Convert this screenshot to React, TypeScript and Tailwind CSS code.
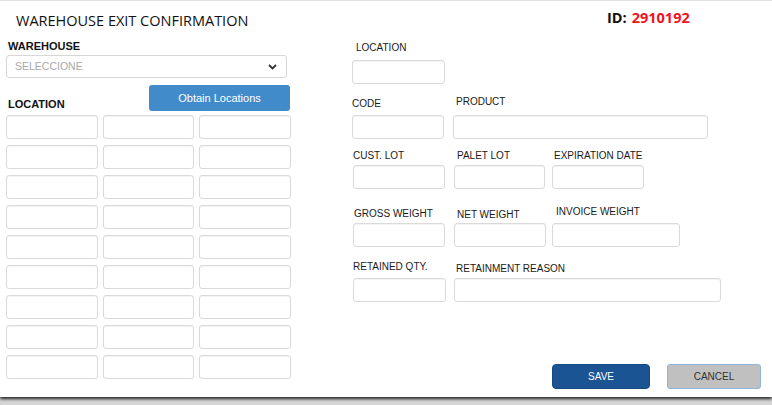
const label = "text-[10px] leading-[12px] text-[#1a1a1a] whitespace-nowrap";
const input =
  "h-[24px] rounded-[3px] border border-[#dadada] bg-white shadow-[inset_0_1px_1px_rgba(0,0,0,0.05)]";

function LocationGrid() {
  const cells = Array.from({ length: 27 }, (_, i) => i);
  return (
    <div className="mt-[4px] grid grid-cols-3 gap-x-[5px] gap-y-[6px]">
      {cells.map((i) => (
        <div key={i} className={input} />
      ))}
    </div>
  );
}

export default function App() {
  return (
    <div className="h-[405px] w-full overflow-hidden bg-[#d6d6d6] font-['Liberation_Sans',Arial,sans-serif]">
      <div className="flex h-[397px] w-full border-t border-[#e2e2e2] bg-white shadow-[0_2px_3px_rgba(0,0,0,0.85)]">
        {/* left column */}
        <div className="ml-[6px] flex w-[285px] flex-col">
          <h1 className="pl-[10px] pt-[10px] font-['Open_Sans',sans-serif] text-[14.5px] leading-[20px] text-[#111]">
            WAREHOUSE EXIT CONFIRMATION
          </h1>
          <div className="mt-[9px] pl-[2px] text-[11px] font-bold leading-[13px] text-[#111]">
            WAREHOUSE
          </div>
          <div className="mt-[2px] flex h-[23px] w-[281px] items-center justify-between rounded-[3px] border border-[#d6d6d6] bg-white pl-[8px] pr-[9px]">
            <span className="text-[10.5px] text-[#a9a9a9]">SELECCIONE</span>
            <svg width="9" height="6" viewBox="0 0 9 6" fill="none">
              <path d="M1 1l3.5 3.5L8 1" stroke="#333" strokeWidth="1.8" />
            </svg>
          </div>
          <div className="mt-[7px] flex items-end justify-between">
            <div className="pl-[2px] text-[11px] font-bold leading-[13px] text-[#111]">LOCATION</div>
            <button className="mr-[1px] flex h-[26px] w-[141px] items-center justify-center rounded-[3px] bg-[#428bca] text-[11px] text-white">
              Obtain Locations
            </button>
          </div>
          <LocationGrid />
        </div>

        {/* right column */}
        <div className="ml-[61px] flex flex-1 flex-col">
          <div className="flex h-[20px] pl-[255px] pt-[7px] box-content font-['Open_Sans',sans-serif] text-[14.5px] font-bold leading-[20px]">
            <span className="text-[#111]">ID:</span>
            <span className="ml-[5px] text-[#f0141e]">2910192</span>
          </div>

          <div className="flex h-[32px]">
            <div className={`${label} pl-[4px] pt-[14px]`}>LOCATION</div>
          </div>
          <div className="flex">
            <div className={`${input} w-[93px]`} />
          </div>

          <div className="flex h-[31px]">
            <div className={`${label} w-[92px] pt-[14px]`}>CODE</div>
            <div className={`${label} ml-[9px] pl-[3px] pt-[12px]`}>PRODUCT</div>
          </div>
          <div className="flex">
            <div className={`${input} w-[92px]`} />
            <div className={`${input} ml-[9px] w-[255px]`} />
          </div>

          <div className="flex h-[26px]">
            <div className={`${label} ml-[1px] w-[92px] pt-[11px]`}>CUST. LOT</div>
            <div className={`${label} ml-[9px] w-[91px] pl-[3px] pt-[11px]`}>PALET LOT</div>
            <div className={`${label} ml-[7px] pl-[2px] pt-[11px]`}>EXPIRATION DATE</div>
          </div>
          <div className="flex">
            <div className={`${input} ml-[1px] w-[92px]`} />
            <div className={`${input} ml-[9px] w-[91px]`} />
            <div className={`${input} ml-[7px] w-[92px]`} />
          </div>

          <div className="flex h-[34px]">
            <div className={`${label} ml-[1px] w-[92px] pl-[1px] pt-[19px]`}>GROSS WEIGHT</div>
            <div className={`${label} ml-[9px] w-[92px] pl-[3px] pt-[20px]`}>NET WEIGHT</div>
            <div className={`${label} ml-[6px] pl-[4px] pt-[17px]`}>INVOICE WEIGHT</div>
          </div>
          <div className="flex">
            <div className={`${input} ml-[1px] w-[92px]`} />
            <div className={`${input} ml-[9px] w-[92px]`} />
            <div className={`${input} ml-[6px] w-[128px]`} />
          </div>

          <div className="flex h-[31px]">
            <div className={`${label} ml-[1px] w-[93px] pt-[14px]`}>RETAINED QTY.</div>
            <div className={`${label} ml-[8px] pl-[2px] pt-[16px]`}>RETAINMENT REASON</div>
          </div>
          <div className="flex">
            <div className={`${input} ml-[1px] w-[93px]`} />
            <div className={`${input} ml-[8px] w-[267px]`} />
          </div>

          <div className="ml-[200px] mt-[62px] flex gap-[17px]">
            <button className="flex h-[25px] w-[98px] items-center justify-center rounded-[4px] border border-[#164a82] bg-[#1b5492] text-[10px] text-white">
              SAVE
            </button>
            <button className="flex h-[25px] w-[94px] items-center justify-center rounded-[3px] border border-[#8db6da] bg-[#c0c0c0] text-[10px] text-[#333]">
              CANCEL
            </button>
          </div>
        </div>
      </div>
    </div>
  );
}
